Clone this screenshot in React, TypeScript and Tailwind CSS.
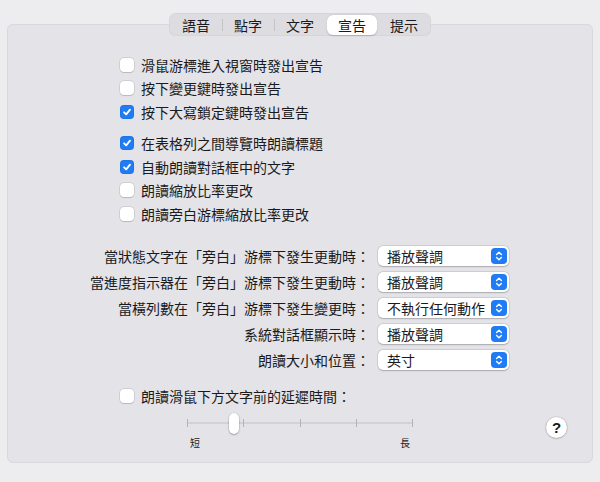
import React from "react";

function Box({ checked }: { checked?: boolean }) {
  return checked ? (
    <span className="flex h-[14px] w-[14px] shrink-0 items-center justify-center rounded-[4px] bg-[#1f7cf5] shadow-[inset_0_0_0_0.5px_rgba(0,0,0,0.12)]">
      <svg width="10" height="10" viewBox="0 0 10 10">
        <path d="M2.1 5.3 L4.2 7.4 L8 2.6" stroke="white" strokeWidth="1.8" fill="none" strokeLinecap="round" strokeLinejoin="round" />
      </svg>
    </span>
  ) : (
    <span className="h-[14px] w-[14px] shrink-0 rounded-[4px] bg-white shadow-[0_0_0_0.5px_rgba(0,0,0,0.16),0_0.5px_1px_rgba(0,0,0,0.12)]" />
  );
}

function CheckRow({ label, checked }: { label: string; checked?: boolean }) {
  return (
    <div className="flex h-[23.5px] items-center pl-[112px]">
      <Box checked={checked} />
      <span className="ml-[7px] text-[14px] leading-[18px] text-[#1a1a1c]">{label}</span>
    </div>
  );
}

function Popup({ label, value }: { label: string; value: string }) {
  return (
    <div className="flex h-[26px] items-center">
      <div className="w-[362px] text-right text-[14px] leading-[18px] text-[#1a1a1c] whitespace-nowrap">{label}</div>
      <div className="ml-[8px] flex h-[20px] w-[131px] items-center justify-between rounded-[5px] bg-white pl-[9px] pr-[2px] shadow-[0_0_0_0.5px_rgba(0,0,0,0.12),0_0.5px_1.5px_rgba(0,0,0,0.2)]">
        <span className="text-[14px] leading-[18px] text-[#1a1a1c]">{value}</span>
        <span className="flex h-[16px] w-[16px] items-center justify-center rounded-[4px] bg-[#1f7cf5]">
          <svg width="10" height="12" viewBox="0 0 10 12">
            <path d="M2.6 4.6 L5 2.2 L7.4 4.6 M2.6 7.4 L5 9.8 L7.4 7.4" stroke="white" strokeWidth="1.4" fill="none" strokeLinecap="round" strokeLinejoin="round" />
          </svg>
        </span>
      </div>
    </div>
  );
}

const tabs = ["語音", "點字", "文字", "宣告", "提示"];

export default function App() {
  return (
    <div className="h-[482px] w-[600px] bg-[#edecef] pt-[13px] font-['Noto_Sans_CJK_TC','Noto_Sans',sans-serif]">
      <div className="relative z-10 mx-auto flex h-[23px] w-[262px] items-center rounded-[7px] bg-[#dddce0] px-[2px] shadow-[inset_0_0_0_0.5px_rgba(0,0,0,0.06)]">
        {tabs.map((t, i) => {
          const sel = t === "宣告";
          const showDivider = i > 0 && !sel && tabs[i - 1] !== "宣告";
          return (
            <React.Fragment key={t}>
              {i > 0 && (
                <span className="flex h-[12px] w-[2px] items-center justify-center">
                  {showDivider && <span className="h-[12px] w-[1px] bg-[#c4c3c7]" />}
                </span>
              )}
              <div
                className={
                  "flex h-[20px] w-[50px] items-center justify-center text-[14px] leading-[18px] text-[#1a1a1c] " +
                  (sel ? "rounded-[6px] bg-white shadow-[0_0.5px_1.5px_rgba(0,0,0,0.2)]" : "")
                }
              >
                {t}
              </div>
            </React.Fragment>
          );
        })}
      </div>
      <div className="mx-[7px] -mt-[12px] h-[439px] rounded-[6px] border border-[#d9d8dc] bg-[#e4e3e7] pt-[28px]">
        <CheckRow label="滑鼠游標進入視窗時發出宣告" />
        <CheckRow label="按下變更鍵時發出宣告" />
        <CheckRow label="按下大寫鎖定鍵時發出宣告" checked />
        <div className="h-[8px]" />
        <CheckRow label="在表格列之間導覽時朗讀標題" checked />
        <CheckRow label="自動朗讀對話框中的文字" checked />
        <CheckRow label="朗讀縮放比率更改" />
        <CheckRow label="朗讀旁白游標縮放比率更改" />
        <div className="h-[17px]" />
        <Popup label="當狀態文字在「旁白」游標下發生更動時：" value="播放聲調" />
        <Popup label="當進度指示器在「旁白」游標下發生更動時：" value="播放聲調" />
        <Popup label="當橫列數在「旁白」游標下發生變更時：" value="不執行任何動作" />
        <Popup label="系統對話框顯示時：" value="播放聲調" />
        <Popup label="朗讀大小和位置：" value="英寸" />
        <div className="h-[12px]" />
        <CheckRow label="朗讀滑鼠下方文字前的延遲時間：" />
        <div className="mt-[3px] flex items-start">
          <div className="ml-[179px] w-[226px]">
            <div className="relative h-[24px]">
              <div className="absolute left-0 right-0 top-[11px] h-[2px] rounded-full bg-[#d3d2d6]" />
              <div className="absolute inset-x-0 top-[8px] flex justify-between">
                {[0, 1, 2, 3, 4].map((k) => (
                  <span key={k} className="h-[8px] w-[1px] bg-[#b3b2b6]" />
                ))}
              </div>
              <div className="absolute left-[42px] top-[2px] h-[21px] w-[10px] rounded-full bg-white shadow-[0_0_0_0.5px_rgba(0,0,0,0.12),0_1px_2px_rgba(0,0,0,0.25)]" />
            </div>
            <div className="mt-[2px] flex justify-between px-[3px] text-[10px] leading-[12px] text-[#1a1a1c]">
              <span>短</span>
              <span>長</span>
            </div>
          </div>
          <div className="ml-auto mr-[25px] mt-[6px] flex h-[21px] w-[21px] items-center justify-center rounded-full bg-white font-['Liberation_Sans',sans-serif] text-[15px] font-semibold leading-none text-[#1a1a1c] shadow-[0_0_0_0.5px_rgba(0,0,0,0.1),0_0.5px_2px_rgba(0,0,0,0.25)]">
            ?
          </div>
        </div>
      </div>
    </div>
  );
}
